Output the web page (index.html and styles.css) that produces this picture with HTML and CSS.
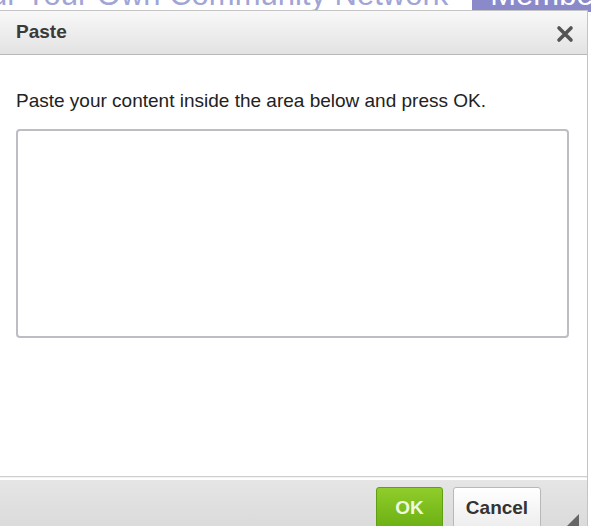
FILE: index.html
```html
<!DOCTYPE html>
<html>
<head>
<meta charset="utf-8">
<link rel="stylesheet" href="styles.css">
</head>
<body>
<div class="page">
  <div class="site-head">
    <span class="site-title">ur Your Own Community Network</span>
    <span class="site-tab">Members</span>
  </div>
</div>
<div class="dialog">
  <div class="dlg-head">
    <span class="dlg-title">Paste</span>
    <svg class="dlg-close" width="18" height="18" viewBox="0 0 18 18"><path d="M3 3 L15 15 M15 3 L3 15" stroke="#555" stroke-width="3.6" stroke-linecap="round"/></svg>
  </div>
  <div class="dlg-body">
    <p class="dlg-label">Paste your content inside the area below and press OK.</p>
    <textarea class="dlg-area"></textarea>
  </div>
  <div class="dlg-foot">
    <button class="btn btn-ok">OK</button>
    <button class="btn btn-cancel">Cancel</button>
    <span class="grip"></span>
  </div>
</div>
</body>
</html>
```
FILE: styles.css
```css
html, body { margin: 0; padding: 0; background: #fff; overflow: hidden; }
body { width: 591px; height: 526px; position: relative; font-family: "Liberation Sans", Arial, sans-serif; }
.page { height: 526px; overflow: hidden; }
.site-head { display: flex; align-items: flex-start; height: 30px; margin-top: -22px; margin-left: -10px; }
.site-title { font-size: 31px; color: #a1a5d6; line-height: 34px; white-space: nowrap; }
.site-tab { margin-left: 24px; background: #8a8acb; color: #fff; font-size: 31px; line-height: 34px; padding: 0 18px; white-space: nowrap; }
.dialog { position: absolute; left: -1px; top: 10px; width: 589px; height: 530px; border: 1px solid #c4c4c4; background: #fff; display: flex; flex-direction: column; box-sizing: border-box; }
.dlg-head { height: 44px; box-sizing: border-box; border-bottom: 1px solid #b8b8b8; background: linear-gradient(#f8f8f8, #e3e3e3); display: flex; align-items: center; justify-content: space-between; padding: 0 13px 0 16px; }
.dlg-title { font-weight: bold; font-size: 19px; color: #3a3a3a; margin-top: -1px; }
.dlg-close { margin-top: 3px; }
.dlg-body { flex: 1; padding: 35px 19px 0 16px; }
.dlg-label { margin: 0; font-size: 19px; color: #222; line-height: 22px; }
.dlg-area { display: block; margin-top: 17px; width: 553px; height: 209px; box-sizing: border-box; border: 2px solid #bdbec4; border-radius: 4px; resize: none; background: #fff; }
.dlg-foot { height: 52px; border-top: 1px solid #cfcfcf; box-shadow: inset 0 1px 0 #f2f2f2, inset 0 3px 0 #fff; background: linear-gradient(#e6e6e6, #d8d8d8); display: flex; align-items: flex-start; padding: 10px 0 0 376px; gap: 10px; position: relative; }
.btn { font-family: "Liberation Sans", Arial, sans-serif; font-weight: bold; font-size: 19px; height: 44px; border-radius: 3px; padding: 0; cursor: default; }
.btn-ok { width: 67px; color: #eefadc; background: linear-gradient(#8fcd2a, #6aae12); border: 1px solid #5e9f14; padding-bottom: 2px; }
.btn-cancel { width: 88px; color: #333; background: linear-gradient(#ffffff, #ececec); border: 1px solid #b8b8b8; padding-bottom: 2px; }
.grip { position: absolute; right: 8px; bottom: 11px; width: 0; height: 0; border-left: 14px solid transparent; border-bottom: 14px solid #666; }
```
